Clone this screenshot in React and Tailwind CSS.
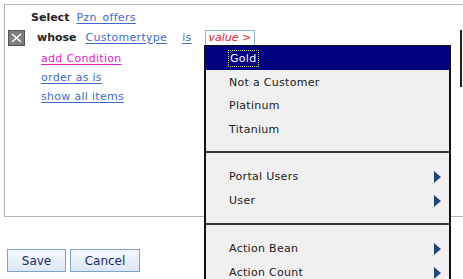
import React from 'react';

const font = { fontFamily: '"DejaVu Sans", Verdana, sans-serif' };

const Arrow = () => (
  <svg width="7" height="12" viewBox="0 0 7 12" className="shrink-0">
    <path d="M0 0 L7 6 L0 12 Z" fill="#1f4a7a" />
  </svg>
);

const Item = ({ label, sub }) => (
  <div className="flex h-[23.5px] items-center justify-between pl-[23px] pr-[8px] tracking-[0.3px] text-[#1a1a1a]">
    <span>{label}</span>
    {sub && <Arrow />}
  </div>
);

const Sep = () => <div className="h-[2px] bg-[#333]" />;

const Dropdown = () => (
  <div className="absolute left-[204px] top-[45px] w-[247px] border-x-2 border-t border-[#111] bg-[#f0f0f0]">
    <div className="flex h-[24px] items-center bg-[#000080] pl-[22px]">
      <span className="border border-dotted border-[#d8d860] px-[1px] leading-[15px] tracking-[0.3px] text-white">Gold</span>
    </div>
    <div className="pt-[1px] pb-[9px]">
      <Item label="Not a Customer" />
      <Item label="Platinum" />
      <Item label="Titanium" />
    </div>
    <Sep />
    <div className="pt-[13px] pb-[10px]">
      <Item label="Portal Users" sub />
      <Item label="User" sub />
    </div>
    <Sep />
    <div className="pt-[13px]">
      <Item label="Action Bean" sub />
      <Item label="Action Count" sub />
    </div>
  </div>
);

const Link = ({ children, className = '' }) => (
  <span className={`underline decoration-1 underline-offset-2 tracking-[0.3px] ${className}`}>{children}</span>
);

export default function App() {
  return (
    <div className="relative h-[279px] w-[463px] overflow-hidden bg-white text-[11px] text-[#222]" style={font}>
      <div className="ml-[4px] mt-[4px] h-[213px] w-[470px] border border-[#b4b4b4] bg-white">
        <div className="flex h-[20px] items-center pl-[26px] pt-[6px]">
          <span className="font-bold">Select</span>
          <Link className="ml-[7px] text-[#3c6cc8]">Pzn_offers</Link>
        </div>
        <div className="mt-[3px] flex h-[20px] items-center pl-[3px]">
          <div className="flex h-[16px] w-[17px] items-center justify-center border border-[#555] bg-[#7d7d7d]">
            <svg width="11" height="10" viewBox="0 0 11 10">
              <path d="M1 1 L10 9 M10 1 L1 9" stroke="#fff" strokeWidth="1.6" />
            </svg>
          </div>
          <span className="ml-[12px] font-bold">whose</span>
          <Link className="ml-[9px] text-[#3c6cc8]">Customertype</Link>
          <Link className="ml-[15px] text-[#3c6cc8]">is</Link>
          <div className="ml-[13px] flex h-[17px] items-center border border-b-0 border-[#8fb3e0] px-[3px] italic text-[#e02020]">
            value &gt;
          </div>
        </div>
        <div className="flex flex-col pl-[36px] pt-[1px]">
          <Link className="h-[19px] leading-[19px] text-[#e020d0]">add Condition</Link>
          <Link className="h-[19px] leading-[19px] text-[#3c6cc8]">order as is</Link>
          <Link className="h-[19px] leading-[19px] text-[#3c6cc8]">show all items</Link>
        </div>
      </div>
      <div className="absolute right-[1px] top-[30px] h-[57px] w-[2px] bg-[#222]" />
      <div className="ml-[7px] mt-[32px] flex gap-[4px]">
        <button className="h-[23px] w-[59px] border border-[#7da2ce] bg-gradient-to-b from-[#f4f8fd] to-[#dce7f5] text-[12px] text-[#1c2a66]">
          Save
        </button>
        <button className="h-[23px] w-[70px] border border-[#7da2ce] bg-gradient-to-b from-[#f4f8fd] to-[#dce7f5] text-[12px] text-[#1c2a66]">
          Cancel
        </button>
      </div>
      <Dropdown />
    </div>
  );
}
